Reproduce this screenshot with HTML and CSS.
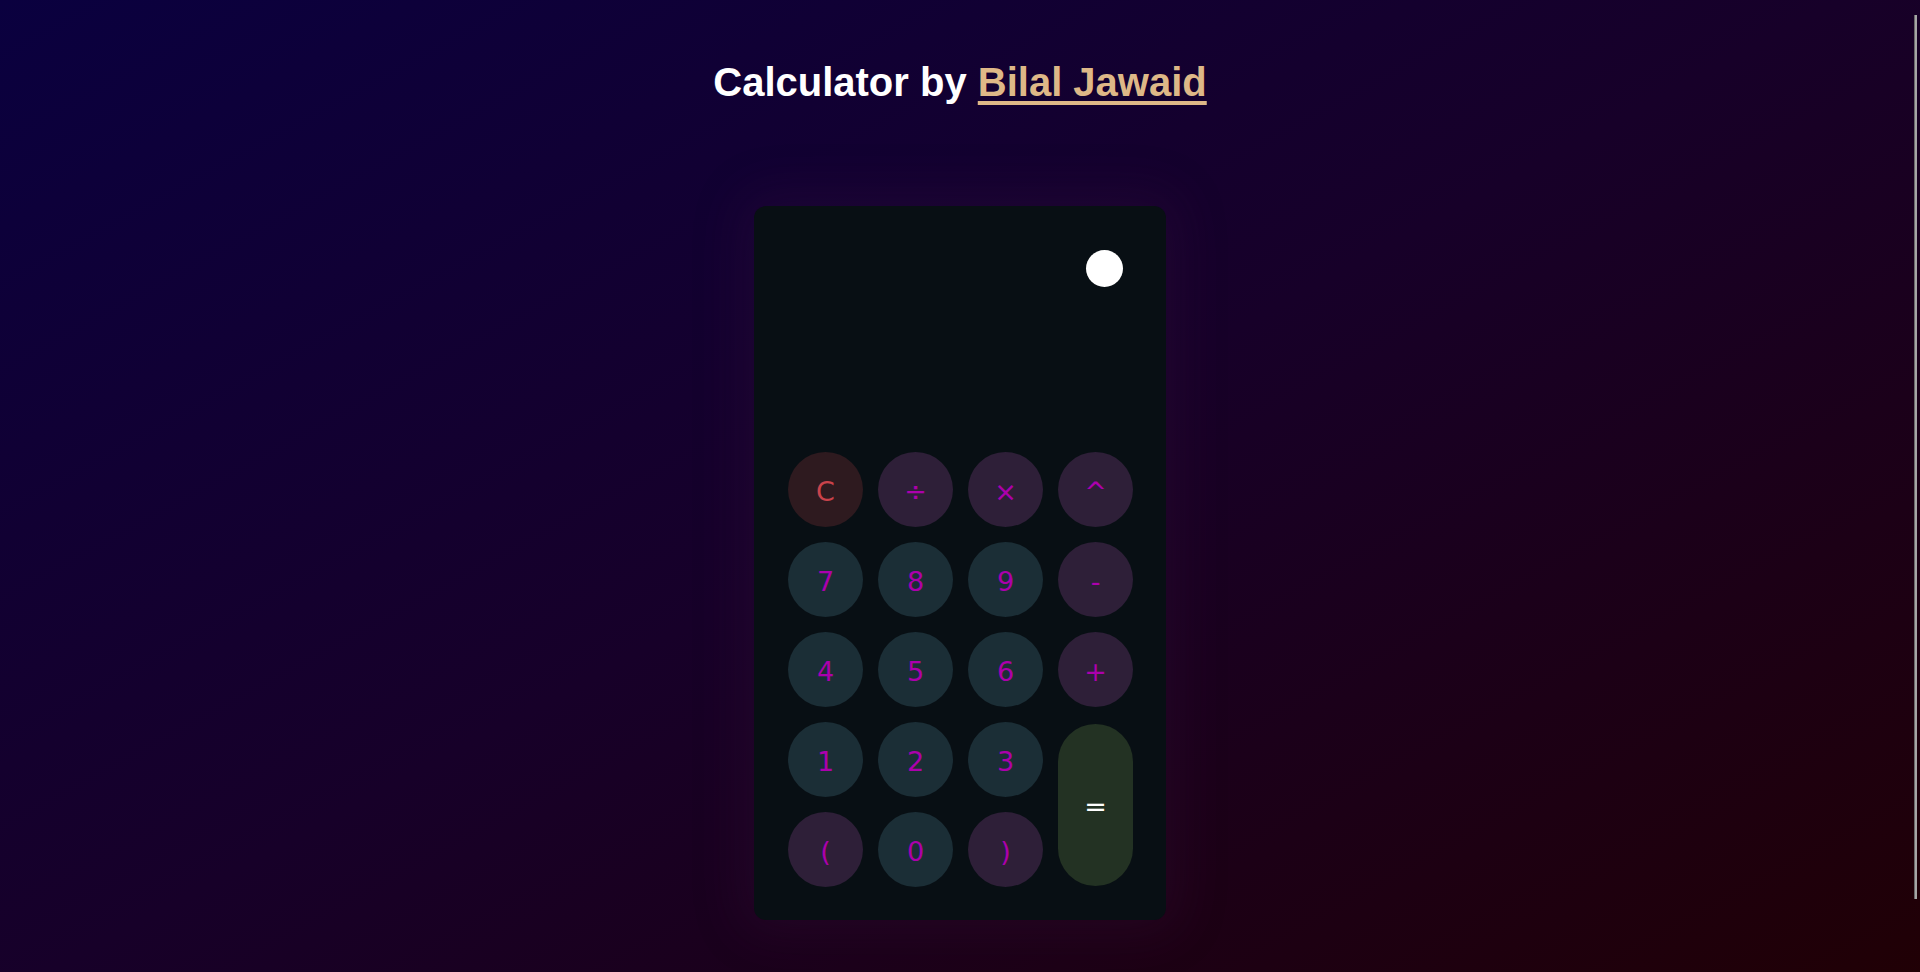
FILE: index.html
```html
<!DOCTYPE html>
<html lang="en">
<head>
<meta charset="utf-8">
<title>Calculator</title>
<link rel="stylesheet" href="styles.css">
</head>
<body>
<main class="page">
  <h1 class="title">Calculator by <a class="author" href="#">Bilal Jawaid</a></h1>
  <section class="calc">
    <div class="topbar"><span class="toggle"></span></div>
    <div class="display"></div>
    <div class="keys">
      <button class="key clear">C</button>
      <button class="key op">÷</button>
      <button class="key op">×</button>
      <button class="key op">^</button>
      <button class="key num">7</button>
      <button class="key num">8</button>
      <button class="key num">9</button>
      <button class="key op">-</button>
      <button class="key num">4</button>
      <button class="key num">5</button>
      <button class="key num">6</button>
      <button class="key op">+</button>
      <button class="key num">1</button>
      <button class="key num">2</button>
      <button class="key num">3</button>
      <button class="key equal">=</button>
      <button class="key op">(</button>
      <button class="key num">0</button>
      <button class="key op">)</button>
    </div>
  </section>
</main>
<div class="scroll-thumb" aria-hidden="true"></div>
</body>
</html>
```

FILE: styles.css
```css
html, body {
  margin: 0;
  padding: 0;
}
body {
  background: linear-gradient(to bottom right, #0a003f 0%, #170029 48%, #210003 100%);
  min-height: 100vh;
  font-family: "DejaVu Sans", sans-serif;
}
.page {
  display: flex;
  flex-direction: column;
  align-items: center;
  padding: 58px 0 120px;
}
.title {
  margin: 0;
  font-family: "Liberation Sans", Arial, sans-serif;
  font-weight: bold;
  font-size: 40px;
  line-height: 48px;
  color: #ffffff;
}
.author {
  color: #deb887;
  text-decoration: underline;
  text-decoration-thickness: 4px;
  text-underline-offset: 5px;
  text-decoration-skip-ink: none;
}
.calc {
  margin-top: 100px;
  width: 345px;
  padding: 34px 33px 33px 34px;
  background: #080f14;
  border-radius: 12px;
  box-shadow: 0 0 50px 14px rgba(70, 25, 70, 0.2);
}
.topbar {
  display: flex;
  justify-content: flex-end;
  padding: 10px 10px 0 0;
}
.toggle {
  width: 37px;
  height: 37px;
  border-radius: 50%;
  background: #ffffff;
}
.display {
  height: 165px;
}
.keys {
  display: grid;
  grid-template-columns: repeat(4, 75px);
  grid-auto-rows: 75px;
  gap: 15px;
}
.key {
  border: none;
  border-radius: 50%;
  padding: 3px 0 0;
  font-family: "DejaVu Sans", sans-serif;
  font-size: 27px;
  color: #ac00ac;
  display: flex;
  align-items: center;
  justify-content: center;
}
.num {
  background: #1b2e36;
}
.op {
  background: #2e1f38;
}
.clear {
  background: #2e1a1f;
  color: #c9434b;
}
.equal {
  grid-column: 4;
  grid-row: 4 / span 2;
  align-self: center;
  height: 162px;
  border-radius: 38px;
  background: #233223;
  color: #ffffff;
}
.scroll-thumb {
  position: fixed;
  top: 15px;
  right: 3px;
  width: 2px;
  height: 884px;
  background: #a6a6a6;
  border-left: 1px solid #6a6a6a;
}
```
